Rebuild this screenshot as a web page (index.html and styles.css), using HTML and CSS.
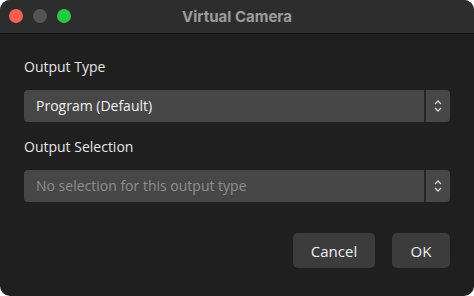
FILE: index.html
```html
<!DOCTYPE html>
<html lang="en">
<head>
    <meta charset="UTF-8">
    <meta name="viewport" content="width=device-width, initial-scale=1.0">
    <title>Virtual Camera</title>
    <link rel="stylesheet" href="styles.css">
</head>
<body>
    <div class="window">
        <!-- Title bar -->
        <div class="titlebar">
            <div class="lights">
                <span class="light red"></span>
                <span class="light grey"></span>
                <span class="light green"></span>
            </div>
            <div class="title">Virtual Camera</div>
        </div>

        <div class="content">
            <div class="label">Output Type</div>
            <div class="select">
                <div class="value">Program (Default)</div>
                <div class="arrows">
                    <svg width="8" height="14" viewBox="0 0 8 14"><path d="M1 5 L4 2 L7 5 M1 9 L4 12 L7 9" fill="none" stroke="#d8d8d8" stroke-width="1.3"/></svg>
                </div>
            </div>

            <div class="label second">Output Selection</div>
            <div class="select">
                <div class="value muted">No selection for this output type</div>
                <div class="arrows">
                    <svg width="8" height="14" viewBox="0 0 8 14"><path d="M1 5 L4 2 L7 5 M1 9 L4 12 L7 9" fill="none" stroke="#d8d8d8" stroke-width="1.3"/></svg>
                </div>
            </div>

            <div class="buttons">
                <button class="button cancel">Cancel</button>
                <button class="button ok">OK</button>
            </div>
        </div>
    </div>
</body>
</html>
```

FILE: styles.css
```css
html, body {
    margin: 0;
    padding: 0;
    background: #ffffff;
}
body {
    font-family: "Open Sans", "Noto Sans", sans-serif;
}
.window {
    width: 474px;
    height: 296px;
    background: #1f1f1f;
    border-radius: 10px;
    overflow: hidden;
    display: flex;
    flex-direction: column;
}
.titlebar {
    height: 33px;
    background: #2d2d2d;
    border-bottom: 1px solid #111111;
    position: relative;
    display: flex;
    align-items: center;
    justify-content: center;
}
.lights {
    position: absolute;
    left: 9px;
    top: 9px;
    display: flex;
    gap: 10px;
}
.light {
    width: 14px;
    height: 14px;
    border-radius: 50%;
    display: block;
}
.red { background: #fe5f57; }
.grey { background: #555555; }
.green { background: #28c840; }
.title {
    font-family: Inter, "Liberation Sans", sans-serif;
    font-weight: 700;
    font-size: 15px;
    color: #9c9c9c;
}
.content {
    padding: 23px 24px 0 24px;
    display: flex;
    flex-direction: column;
}
.label {
    font-size: 14px;
    line-height: 20px;
    color: #e6e6e6;
    margin-bottom: 13px;
}
.label.second {
    margin-top: 15px;
}
.select {
    height: 32px;
    background: #474747;
    border-radius: 4px;
    display: flex;
    overflow: hidden;
}
.value {
    flex: 1;
    padding-left: 12px;
    font-size: 14px;
    line-height: 32px;
    color: #f0f0f0;
}
.value.muted {
    color: #8e8e8e;
}
.arrows {
    width: 24px;
    border-left: 2px solid #262626;
    display: flex;
    align-items: center;
    justify-content: center;
}
.buttons {
    display: flex;
    justify-content: flex-end;
    gap: 17px;
    margin-top: 31px;
}
.button {
    height: 35px;
    background: #3c3c3c;
    border: none;
    border-radius: 5px;
    color: #f0f0f0;
    font-family: "Open Sans", "Noto Sans", sans-serif;
    font-size: 15px;
    padding: 0;
}
.cancel { width: 82px; }
.ok { width: 58px; }
```
